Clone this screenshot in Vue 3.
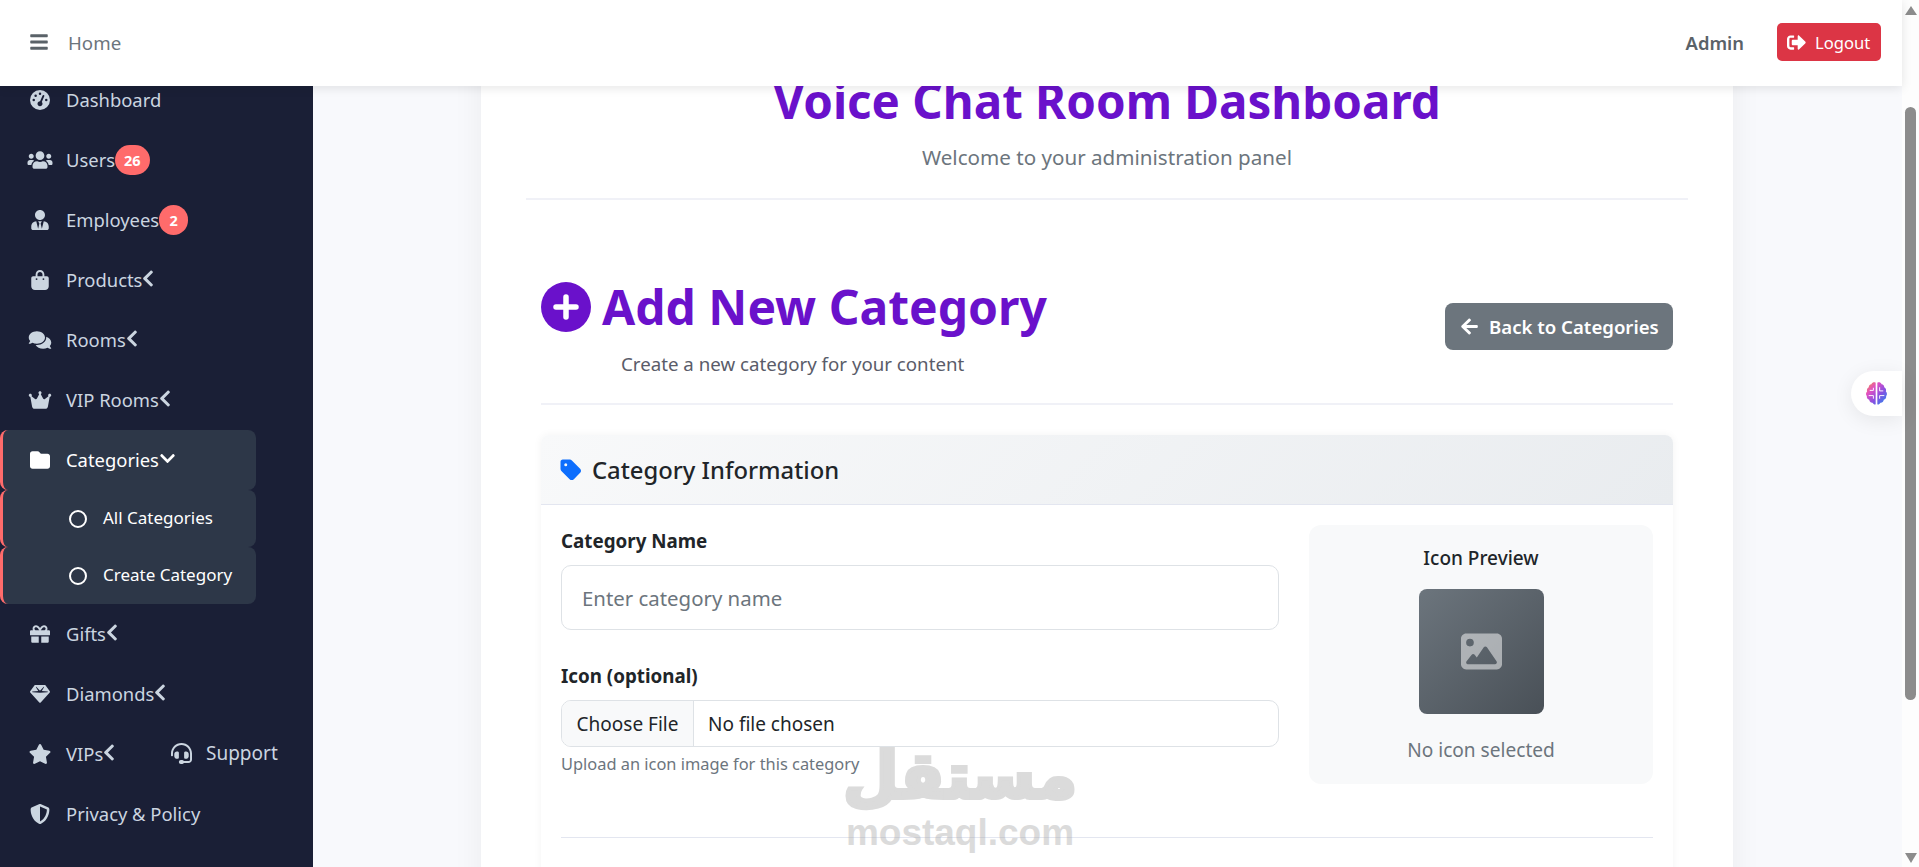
<template>
  <div class="app">
    <div class="page">
      <header class="topbar">
        <div class="top-left">
          <svg class="bars" viewBox="0 0 448 512"><path :d="icons.bars" /></svg>
          <span class="home">Home</span>
        </div>
        <div class="top-right">
          <span class="admin">Admin</span>
          <button class="logout">
            <svg viewBox="0 0 512 512"><path :d="icons.signout" /></svg>
            Logout
          </button>
        </div>
      </header>

      <div class="below">
        <aside class="sidebar">
          <ul class="nav">
            <template v-for="item in menu" :key="item.label">
              <li :class="['nav-row', { open: item.open }]">
                <span class="nav-icon">
                  <svg :viewBox="`0 0 ${item.w} 512`"><path :d="icons[item.icon]" /></svg>
                </span>
                <span class="nav-label">{{ item.label }}</span>
                <span v-if="item.badge" class="badge">{{ item.badge }}</span>
                <svg v-if="item.arrow === 'left'" class="chev" viewBox="0 0 320 512"><path :d="icons.chevLeft" /></svg>
                <svg v-if="item.arrow === 'down'" class="chev-down" viewBox="0 0 448 512"><path :d="icons.chevDown" /></svg>
                <span v-if="item.label === 'VIPs'" class="support">
                  <svg viewBox="0 0 512 512"><path :d="icons.headset" /></svg>
                  Support
                </span>
              </li>
              <template v-if="item.open">
                <li v-for="sub in item.children" :key="sub" class="nav-sub">
                  <span class="ring"></span>
                  <span class="sub-label">{{ sub }}</span>
                </li>
              </template>
            </template>
          </ul>
        </aside>

        <main class="content">
          <div class="card">
            <div class="dash-head">
              <h1>Voice Chat Room Dashboard</h1>
              <p>Welcome to your administration panel</p>
            </div>

            <section class="inner">
              <div class="page-head">
                <div>
                  <h2>
                    <svg class="plus" viewBox="0 0 50 50">
                      <circle cx="25" cy="25" r="25" fill="#6a11cb" />
                      <path d="M25 15v20M15 25h20" stroke="#fff" stroke-width="5.5" stroke-linecap="round" />
                    </svg>
                    Add New Category
                  </h2>
                  <p>Create a new category for your content</p>
                </div>
                <a class="back">
                  <svg viewBox="0 0 448 512"><path :d="icons.arrowLeft" /></svg>
                  Back to Categories
                </a>
              </div>

              <div class="form-card">
                <div class="form-title">
                  <svg viewBox="0 0 448 512"><path :d="icons.tag" /></svg>
                  Category Information
                </div>
                <div class="form-body">
                  <div class="form-row">
                    <div class="fields">
                      <label>Category Name</label>
                      <input class="text-input" type="text" placeholder="Enter category name" />
                      <label class="second">Icon (optional)</label>
                      <input class="file-input" type="file" />
                      <small>Upload an icon image for this category</small>
                    </div>
                    <div class="preview">
                      <h6>Icon Preview</h6>
                      <div class="tile">
                        <svg viewBox="0 0 512 512"><path :d="icons.image" /></svg>
                      </div>
                      <p>No icon selected</p>
                    </div>
                  </div>
                  <hr />
                </div>
              </div>
            </section>
          </div>
        </main>
      </div>
    </div>

    <div class="scrollbar">
      <span class="arrow-up"></span>
      <span class="thumb"></span>
      <span class="arrow-down"></span>
    </div>

    <div class="brain">
      <svg viewBox="0 0 24 24">
        <defs>
          <linearGradient id="brainFill" x1="0" y1="0" x2="1" y2="1">
            <stop offset="0" stop-color="#f7913a" />
            <stop offset=".3" stop-color="#e04fc4" />
            <stop offset=".6" stop-color="#8a4fe0" />
            <stop offset="1" stop-color="#1f8cf0" />
          </linearGradient>
        </defs>
        <path fill="url(#brainFill)" d="M11.2 1.6C9.5.9 7.9 1.5 7.1 3 5.5 3.1 4.4 4.5 4.6 6 3.1 6.8 2.4 8.5 3 10c-1.3 1.2-1.4 3.1-.3 4.4-.3 1.7.8 3.2 2.3 3.6.3 1.9 1.7 3 3.2 2.8 1 1.7 2.2 2 3 1.5V1.6zM12.8 1.6c1.7-.7 3.3-.1 4.1 1.4 1.6.1 2.7 1.5 2.5 3 1.5.8 2.2 2.5 1.6 4 1.3 1.2 1.4 3.1.3 4.4.3 1.7-.8 3.2-2.3 3.6-.3 1.9-1.7 3-3.2 2.8-1 1.7-2.2 2-3 1.5V1.6z" />
        <path fill="none" stroke="#fff" stroke-width=".9" d="M5.5 9h3.5v-2.5M4.5 14h4.5v3M15 6v3.5h3.5M15 17v-3h4.5" />
      </svg>
    </div>

    <div class="watermark">
      <span class="wm-ar">مستقل</span>
      <span class="wm-en">mostaql.com</span>
    </div>
  </div>
</template>

<script setup>
const icons = {
  bars: 'M16 132h416c8.837 0 16-7.163 16-16V76c0-8.837-7.163-16-16-16H16C7.163 60 0 67.163 0 76v40c0 8.837 7.163 16 16 16zm0 160h416c8.837 0 16-7.163 16-16v-40c0-8.837-7.163-16-16-16H16c-8.837 0-16 7.163-16 16v40c0 8.837 7.163 16 16 16zm0 160h416c8.837 0 16-7.163 16-16v-40c0-8.837-7.163-16-16-16H16c-8.837 0-16 7.163-16 16v40c0 8.837 7.163 16 16 16z',
  arrowLeft: 'M257.5 445.1l-22.2 22.2c-9.4 9.4-24.6 9.4-33.9 0L7 273c-9.4-9.4-9.4-24.6 0-33.9L201.4 44.7c9.4-9.4 24.6-9.4 33.9 0l22.2 22.2c9.5 9.5 9.3 25-.4 34.3L136.6 216H424c13.3 0 24 10.7 24 24v32c0 13.3-10.7 24-24 24H136.6l120.5 114.8c9.8 9.3 10 24.8.4 34.3z',
  star: 'M259.3 17.8L194 150.2 47.9 171.5c-26.2 3.8-36.7 36.1-17.7 54.6l105.7 103-25 145.5c-4.5 26.3 23.2 46 46.4 33.7L288 439.6l130.7 68.7c23.2 12.2 50.9-7.4 46.4-33.7l-25-145.5 105.7-103c19-18.5 8.5-50.8-17.7-54.6L382 150.2 316.7 17.8c-11.7-23.6-45.6-23.9-57.4 0z',
  signout: 'M497 273L329 441c-15 15-41 4.5-41-17v-96H152c-13.3 0-24-10.7-24-24v-96c0-13.3 10.7-24 24-24h136V88c0-21.4 25.9-32 41-17l168 168c9.3 9.4 9.3 24.6 0 34zM192 436v-40c0-6.6-5.4-12-12-12H96c-17.7 0-32-14.3-32-32V160c0-17.7 14.3-32 32-32h84c6.6 0 12-5.4 12-12V76c0-6.6-5.4-12-12-12H96c-53 0-96 43-96 96v192c0 53 43 96 96 96h84c6.6 0 12-5.4 12-12z',
  folder: 'M64 480H448c35.3 0 64-28.7 64-64V160c0-35.3-28.7-64-64-64H288c-10.1 0-19.6-4.7-25.6-12.8L243.2 57.6C231.1 41.5 212.1 32 192 32H64C28.7 32 0 60.7 0 96V416c0 35.3 28.7 64 64 64z',
  tag: 'M0 80V229.5c0 17 6.7 33.3 18.7 45.3l176 176c25 25 65.5 25 90.5 0L418.7 317.3c25-25 25-65.5 0-90.5l-176-176c-12-12-28.3-18.7-45.3-18.7H48C21.5 32 0 53.5 0 80zm112 32a32 32 0 1 1 0 64 32 32 0 1 1 0-64z',
  image: 'M0 96C0 60.7 28.7 32 64 32H448c35.3 0 64 28.7 64 64V416c0 35.3-28.7 64-64 64H64c-35.3 0-64-28.7-64-64V96zM323.8 202.5c-4.5-6.6-11.9-10.5-19.8-10.5s-15.4 3.9-19.8 10.5l-87 127.6L170.7 297c-4.6-5.7-11.5-9-18.7-9s-14.2 3.3-18.7 9l-64 80c-5.8 7.2-6.9 17.1-2.9 25.4s12.4 13.6 21.6 13.6h96 32H424c8.9 0 17.1-4.9 21.2-12.8s3.6-17.4-1.4-24.7l-120-176zM112 192a48 48 0 1 0 0-96 48 48 0 1 0 0 96z',
  chevLeft: 'M34.52 239.03L228.87 44.69c9.37-9.37 24.57-9.37 33.94 0l22.67 22.67c9.36 9.36 9.37 24.52.04 33.9L131.49 256l154.02 154.75c9.34 9.38 9.32 24.54-.04 33.9l-22.67 22.67c-9.37 9.37-24.57 9.37-33.94 0L34.52 272.97c-9.37-9.37-9.37-24.57 0-33.94z',
  chevDown: 'M207.029 381.476L12.686 187.132c-9.373-9.373-9.373-24.569 0-33.941l22.667-22.667c9.357-9.357 24.522-9.375 33.901-.04L224 284.505l154.745-154.021c9.379-9.335 24.544-9.317 33.901.04l22.667 22.667c9.373 9.373 9.373 24.569 0 33.941L240.971 381.476c-9.373 9.372-24.569 9.372-33.942 0z',
  users: 'M96 224c35.3 0 64-28.7 64-64s-28.7-64-64-64-64 28.7-64 64 28.7 64 64 64zm448 0c35.3 0 64-28.7 64-64s-28.7-64-64-64-64 28.7-64 64 28.7 64 64 64zm32 32h-64c-17.6 0-33.5 7.1-45.1 18.6 40.3 22.1 68.9 62 75.1 109.4h66c17.7 0 32-14.3 32-32v-32c0-35.3-28.7-64-64-64zm-256 0c61.9 0 112-50.1 112-112S381.9 32 320 32 208 82.1 208 144s50.1 112 112 112zm76.8 32h-8.3c-20.8 10-43.9 16-68.5 16s-47.6-6-68.5-16h-8.3C179.6 288 128 339.6 128 403.2V432c0 26.5 21.5 48 48 48h288c26.5 0 48-21.5 48-48v-28.8c0-63.6-51.6-115.2-115.2-115.2zm-223.7-13.4C161.5 263.1 145.6 256 128 256H64c-35.3 0-64 28.7-64 64v32c0 17.7 14.3 32 32 32h65.9c6.3-47.4 34.9-87.3 75.2-109.4z',
  userTie: 'M224 256c70.7 0 128-57.3 128-128S294.7 0 224 0 96 57.3 96 128s57.3 128 128 128zm95.8 32.6L272 480l-32-136 32-56h-96l32 56-32 136-47.8-191.4C56.9 292 0 350.3 0 422.4V464c0 26.5 21.5 48 48 48h352c26.5 0 48-21.5 48-48v-41.6c0-72.1-56.9-130.4-128.2-133.8z',
  bag: 'M160 112c0-35.3 28.7-64 64-64s64 28.7 64 64v48H160V112zm-48 48H48c-26.5 0-48 21.5-48 48V416c0 53 43 96 96 96H352c53 0 96-43 96-96V208c0-26.5-21.5-48-48-48H336V112C336 50.1 285.9 0 224 0S112 50.1 112 112v48zm24 48a24 24 0 1 1 0 48 24 24 0 1 1 0-48zm152 24a24 24 0 1 1 48 0 24 24 0 1 1 -48 0z',
  comments: 'M416 192c0-88.4-93.1-160-208-160S0 103.6 0 192c0 34.3 14.1 65.9 38 92-13.4 30.2-35.5 54.2-35.8 54.5-2.2 2.3-2.8 5.7-1.5 8.7S4.8 352 8 352c36.6 0 66.9-12.3 88.7-25 32.2 15.7 70.3 25 111.3 25 114.9 0 208-71.6 208-160zm122 220c23.9-26 38-57.7 38-92 0-66.9-53.5-124.2-129.3-148.1.9 6.6 1.3 13.3 1.3 20.1 0 105.9-107.7 192-240 192-10.8 0-21.3-.8-31.7-1.9C207.8 439.6 281.8 480 368 480c41 0 79.1-9.2 111.3-25 21.8 12.7 52.1 25 88.7 25 3.2 0 6.1-1.9 7.3-4.8 1.3-2.9.7-6.3-1.5-8.7-.3-.3-22.4-24.2-35.8-54.5z',
  crown: 'M309 106c11.4-7 19-19.7 19-34c0-22.1-17.9-40-40-40s-40 17.9-40 40c0 14.4 7.6 27 19 34L209.7 220.6c-9.1 18.2-32.7 23.4-48.6 10.7L72 160c5-6.7 8-15 8-24c0-22.1-17.9-40-40-40S0 113.9 0 136s17.9 40 40 40c.2 0 .5 0 .7 0L86.4 427.4c5.5 30.4 32 52.6 63 52.6H426.6c30.9 0 57.4-22.1 63-52.6L535.3 176c.2 0 .5 0 .7 0c22.1 0 40-17.9 40-40s-17.9-40-40-40s-40 17.9-40 40c0 9 3 17.3 8 24l-89.1 71.3c-15.9 12.7-39.5 7.5-48.6-10.7L309 106z',
  gift: 'M32 448c0 17.7 14.3 32 32 32h160V320H32v128zm256 32h160c17.7 0 32-14.3 32-32V320H288v160zm192-320h-42.1c6.2-12.1 10.1-25.5 10.1-40 0-48.5-39.5-88-88-88-41.6 0-68.5 21.3-103 68.3-34.5-47-61.4-68.3-103-68.3-48.5 0-88 39.5-88 88 0 14.5 3.8 27.9 10.1 40H32c-17.7 0-32 14.3-32 32v80c0 8.8 7.2 16 16 16h480c8.8 0 16-7.2 16-16v-80c0-17.7-14.3-32-32-32zm-326.1 0c-22.1 0-40-17.9-40-40s17.9-40 40-40c19.9 0 34.6 3.3 86.1 80h-86.1zm206.1 0h-86.1c51.4-76.5 65.7-80 86.1-80 22.1 0 40 17.9 40 40s-17.9 40-40 40z',
  gem: 'M116.7 33.8c4.5-6.1 11.7-9.8 19.3-9.8H376c7.6 0 14.8 3.6 19.3 9.8l112 152c6.8 9.2 6.1 21.9-1.5 30.4l-232 256c-4.5 5-11 7.9-17.8 7.9s-13.2-2.9-17.8-7.9l-232-256c-7.7-8.5-8.3-21.2-1.5-30.4l112-152zm38.5 39.8c-3.3 2.5-4.2 7-2.1 10.5l57.4 95.6L63.3 192c-4.1 .3-7.3 3.8-7.3 8s3.2 7.6 7.3 8l192 16c.4 0 .9 0 1.3 0l192-16c4.1-.3 7.3-3.8 7.3-8s-3.2-7.6-7.3-8L301.5 179.8l57.4-95.6c2.1-3.5 1.2-8-2.1-10.5s-7.9-2.2-10.9 .7L256 170.1 165.9 74.4c-2.9-3-7.6-3.2-10.7-.8z',
  headset: 'M256 48C141.1 48 48 141.1 48 256v40c0 13.3-10.7 24-24 24s-24-10.7-24-24V256C0 114.6 114.6 0 256 0S512 114.6 512 256V400.1c0 48.6-39.4 88-88.1 88L313.6 488c-8.3 14.3-23.8 24-41.6 24H240c-26.5 0-48-21.5-48-48s21.5-48 48-48h32c17.8 0 33.3 9.7 41.6 24l110.4 .1c22.1 0 40-17.9 40-40V256c0-114.9-93.1-208-208-208zM144 208h16c17.7 0 32 14.3 32 32V352c0 17.7-14.3 32-32 32H144c-35.3 0-64-28.7-64-64V272c0-35.3 28.7-64 64-64zm224 0c35.3 0 64 28.7 64 64v48c0 35.3-28.7 64-64 64H352c-17.7 0-32-14.3-32-32V240c0-17.7 14.3-32 32-32h16z',
  shield: 'M256 0c4.6 0 9.2 1 13.4 2.9L457.7 82.8c22 9.3 38.4 31 38.3 57.2c-.5 99.2-41.3 280.7-213.6 363.2c-16.7 8-36.1 8-52.8 0C57.3 420.7 16.5 239.2 16 140c-.1-26.2 16.3-47.9 38.3-57.2L242.7 2.9C246.8 1 251.4 0 256 0zm0 66.8V444.8C394 378 431.1 230.1 432 141.4L256 66.8l0 0z',
  gauge: 'M0 256a256 256 0 1 1 512 0A256 256 0 1 1 0 256zM288 96a32 32 0 1 0 -64 0 32 32 0 1 0 64 0zM256 416c35.3 0 64-28.7 64-64c0-17.4-6.9-33.1-18.1-44.6L366 161.7c5.3-12.1-.2-26.3-12.3-31.6s-26.3 .2-31.6 12.3L257.9 288c-.6 0-1.3 0-1.9 0c-35.3 0-64 28.7-64 64s28.7 64 64 64zM176 144a32 32 0 1 0 -64 0 32 32 0 1 0 64 0zM96 288a32 32 0 1 0 0-64 32 32 0 1 0 0 64zm352-32a32 32 0 1 0 -64 0 32 32 0 1 0 64 0z',
}

const menu = [
  { label: 'Dashboard', icon: 'gauge', w: 512 },
  { label: 'Users', icon: 'users', w: 640, badge: 26 },
  { label: 'Employees', icon: 'userTie', w: 448, badge: 2 },
  { label: 'Products', icon: 'bag', w: 448, arrow: 'left' },
  { label: 'Rooms', icon: 'comments', w: 576, arrow: 'left' },
  { label: 'VIP Rooms', icon: 'crown', w: 576, arrow: 'left' },
  { label: 'Categories', icon: 'folder', w: 512, arrow: 'down', open: true, children: ['All Categories', 'Create Category'] },
  { label: 'Gifts', icon: 'gift', w: 512, arrow: 'left' },
  { label: 'Diamonds', icon: 'gem', w: 512, arrow: 'left' },
  { label: 'VIPs', icon: 'star', w: 576, arrow: 'left' },
  { label: 'Privacy & Policy', icon: 'shield', w: 512 },
]
</script>

<style>
html, body { margin: 0; height: 100%; overflow: hidden; }
</style>

<style scoped>
.app {
  position: relative; display: flex; width: 1919px; height: 867px; overflow: hidden;
  font-family: "Noto Sans", "DejaVu Sans", sans-serif; color: #212529;
  background: #f8f9fc;
}
.page { flex: 1; min-width: 0; display: flex; flex-direction: column; }

.topbar {
  position: relative; z-index: 3; flex: 0 0 86px; display: flex; align-items: center; justify-content: space-between;
  background: #fff; box-shadow: 0 2px 10px rgba(0,0,0,.1); padding: 0 21px 2px 30px; box-sizing: border-box;
}
.top-left { display: flex; align-items: center; }
.bars { width: 18px; height: 20px; fill: #5a6268; }
.home { margin-left: 20px; font-size: 18.7px; color: #6c757d; }
.top-right { display: flex; align-items: center; }
.admin { font-size: 18.4px; font-weight: 600; color: #5a6268; }
.logout {
  display: flex; align-items: center; gap: 9px; margin-left: 33px; width: 104px; height: 38px; padding: 0 0 0 10px;
  border: 0; border-radius: 5px; background: #dc3545; color: #fff; font: inherit; font-size: 16.6px;
}
.logout svg { width: 19px; height: 19px; fill: #fff; }

.below { flex: 1; min-height: 0; display: flex; }
.sidebar { flex: 0 0 313px; background: #1a1f36; color: #cbd5e0; }
.nav { list-style: none; margin: -16px 0 0; padding: 0; }
.nav-row { display: flex; align-items: center; width: 256px; height: 60px; padding-left: 27px; box-sizing: border-box; font-size: 18.4px; white-space: nowrap; }
.nav-row.open, .nav-sub {
  background: #2d3748; color: #fff; border-left: 3px solid #ff6b6b; border-radius: 8px;
}
.nav-row.open { padding-left: 24px; }
.nav-label { margin-top: -2px; }
.nav-icon { width: 26px; height: 22px; margin-right: 13px; display: flex; align-items: center; justify-content: center; }
.nav-icon svg { width: 26px; height: 20px; fill: currentColor; }
.chev { width: 12px; height: 19px; fill: currentColor; margin-top: -4px; flex: none; }
.chev-down { width: 17px; height: 17px; fill: currentColor; margin-top: -3px; flex: none; }
.badge {
  display: flex; align-items: center; justify-content: center; min-width: 29px; height: 30px; padding: 0 9px; box-sizing: border-box;
  border-radius: 15px; background: #ff6b6b; color: #fff; font-size: 14.5px; font-weight: 700;
}
.support { display: flex; align-items: center; position: absolute; left: 171px; gap: 14px; font-size: 19px; margin-top: -2px; }
.support svg { width: 21px; height: 21px; fill: currentColor; }
.nav-sub { display: flex; align-items: center; gap: 16px; width: 256px; height: 57px; padding-left: 66px; box-sizing: border-box; font-size: 17px; }
.sub-label { margin-top: -3px; }
.ring { width: 14px; height: 14px; border: 2px solid #fff; border-radius: 50%; flex: none; }

.content { flex: 1; min-width: 0; padding: 0 169px 0 168px; }
.card {
  margin-top: -60px; height: 1000px; padding: 46px 45px 0; box-sizing: border-box; background: #fff;
  box-shadow: 0 0 30px rgba(0,0,0,.06);
}
.dash-head { padding-bottom: 29px; border-bottom: 2px solid #f0f1f7; text-align: center; }
.dash-head h1 { margin: 0; font-size: 47.5px; line-height: 58px; font-weight: 700; color: #6a11cb; }
.dash-head p { margin: 15px 0 0; font-size: 20.6px; line-height: 24px; color: #6c757d; }

.inner { padding: 0 15px; }
.page-head {
  display: flex; align-items: center; justify-content: space-between; margin-top: 78px; padding-bottom: 27px;
  border-bottom: 2px solid #f0f1f7;
}
.page-head h2 { display: flex; align-items: center; gap: 11px; margin: 0; font-size: 48px; line-height: 58px; font-weight: 700; color: #6a11cb; }
.plus { width: 50px; height: 50px; flex: none; }
.page-head p { margin: 16px 0 0 80px; font-size: 18.7px; line-height: 24px; color: #5a5c69; }
.back {
  display: flex; align-items: center; gap: 10px; box-sizing: border-box; width: 228px; height: 47px; padding-left: 15px; margin-bottom: 2px;
  border-radius: 8px; background: #6c757d; color: #fff; font-size: 18.6px; font-weight: 600;
}
.back svg { width: 19px; height: 19px; fill: #fff; }

.form-card { margin-top: 30px; border-radius: 8px; box-shadow: 0 0 8px rgba(0,0,0,.05); background: #fff; }
.form-title {
  display: flex; align-items: center; gap: 10px; height: 70px; padding-left: 19px; box-sizing: border-box;
  border-radius: 8px 8px 0 0; border-bottom: 1px solid #e3e6f0;
  background: linear-gradient(135deg, #f8f9fa, #e9ecef);
  font-size: 23.8px; font-weight: 500; color: #212529;
}
.form-title svg { width: 22px; height: 24px; fill: #0d6efd; }
.form-body { padding: 20px 20px 120px; }
.form-row { display: flex; gap: 30px; }
.fields { flex: 0 0 718px; display: flex; flex-direction: column; padding-top: 4px; }
label { font-size: 18.8px; line-height: 24px; font-weight: 700; color: #212529; margin-bottom: 12px; }
label.second { margin-top: 34px; }
.text-input {
  box-sizing: border-box; height: 65px; padding: 0 20px; border: 1px solid #dee2e6; border-radius: 10px; outline: 0;
  font: inherit; font-size: 20.4px;
}
.text-input::placeholder { color: #6c757d; opacity: 1; }
.file-input {
  box-sizing: border-box; height: 47px; border: 1px solid #dee2e6; border-radius: 10px; background: #fff;
  font: inherit; font-size: 19px; color: #212529; overflow: hidden;
}
.file-input::file-selector-button {
  height: 47px; width: 132px; margin: -1px 14px 0 0; padding: 0; border: 0; border-right: 1px solid #dee2e6;
  background: #f8f9fa; color: #212529; font: inherit;
}
small { margin-top: 6px; font-size: 16.4px; line-height: 21px; color: #6c757d; }
.preview {
  flex: 1; height: 259px; padding-top: 21px; box-sizing: border-box; border-radius: 12px; background: #f8f9fa; text-align: center;
}
.preview h6 { margin: 0; font-size: 19px; line-height: 24px; font-weight: 500; color: #212529; }
.tile {
  display: flex; align-items: center; justify-content: center; width: 125px; height: 125px; margin: 19px auto 0; border-radius: 8px;
  background: linear-gradient(135deg, #6c757d, #495057);
}
.tile svg { width: 41px; height: 41px; fill: rgba(255,255,255,.5); }
.preview p { margin: 24px 0 0; font-size: 19.1px; line-height: 24px; color: #6c757d; }
hr { margin: 53px 0 0; border: 0; border-top: 1px solid #e3e6f0; }

.scrollbar { position: relative; flex: 0 0 17px; background: #fdfdfd; }
.arrow-up, .arrow-down { position: absolute; left: 3px; width: 0; height: 0; border-left: 6px solid transparent; border-right: 6px solid transparent; }
.arrow-up { top: 6px; border-bottom: 9px solid #8c8c8c; }
.arrow-down { bottom: 4px; border-top: 10px solid #8c8c8c; }
.thumb { position: absolute; left: 3px; top: 107px; width: 11px; height: 593px; border-radius: 5.5px; background: #8c8c8c; }

.brain {
  position: absolute; left: 1851px; top: 371px; width: 51px; height: 45px; display: flex; align-items: center; padding-left: 13px; box-sizing: border-box;
  border-radius: 23px 0 0 23px; background: #fff; box-shadow: 0 4px 20px rgba(0,0,0,.08);
}
.brain svg { width: 25px; height: 25px; }

.watermark {
  position: absolute; left: 820px; top: 738px; width: 280px; display: flex; flex-direction: column; align-items: center;
  color: #aaa; opacity: .42; font-weight: 700; pointer-events: none;
}
.wm-ar { font-family: "DejaVu Sans", sans-serif; font-size: 64px; line-height: 76px; -webkit-text-stroke: 4px #aaa; }
.wm-en { font-family: "Liberation Sans", sans-serif; font-size: 37px; line-height: 38px; }
</style>
